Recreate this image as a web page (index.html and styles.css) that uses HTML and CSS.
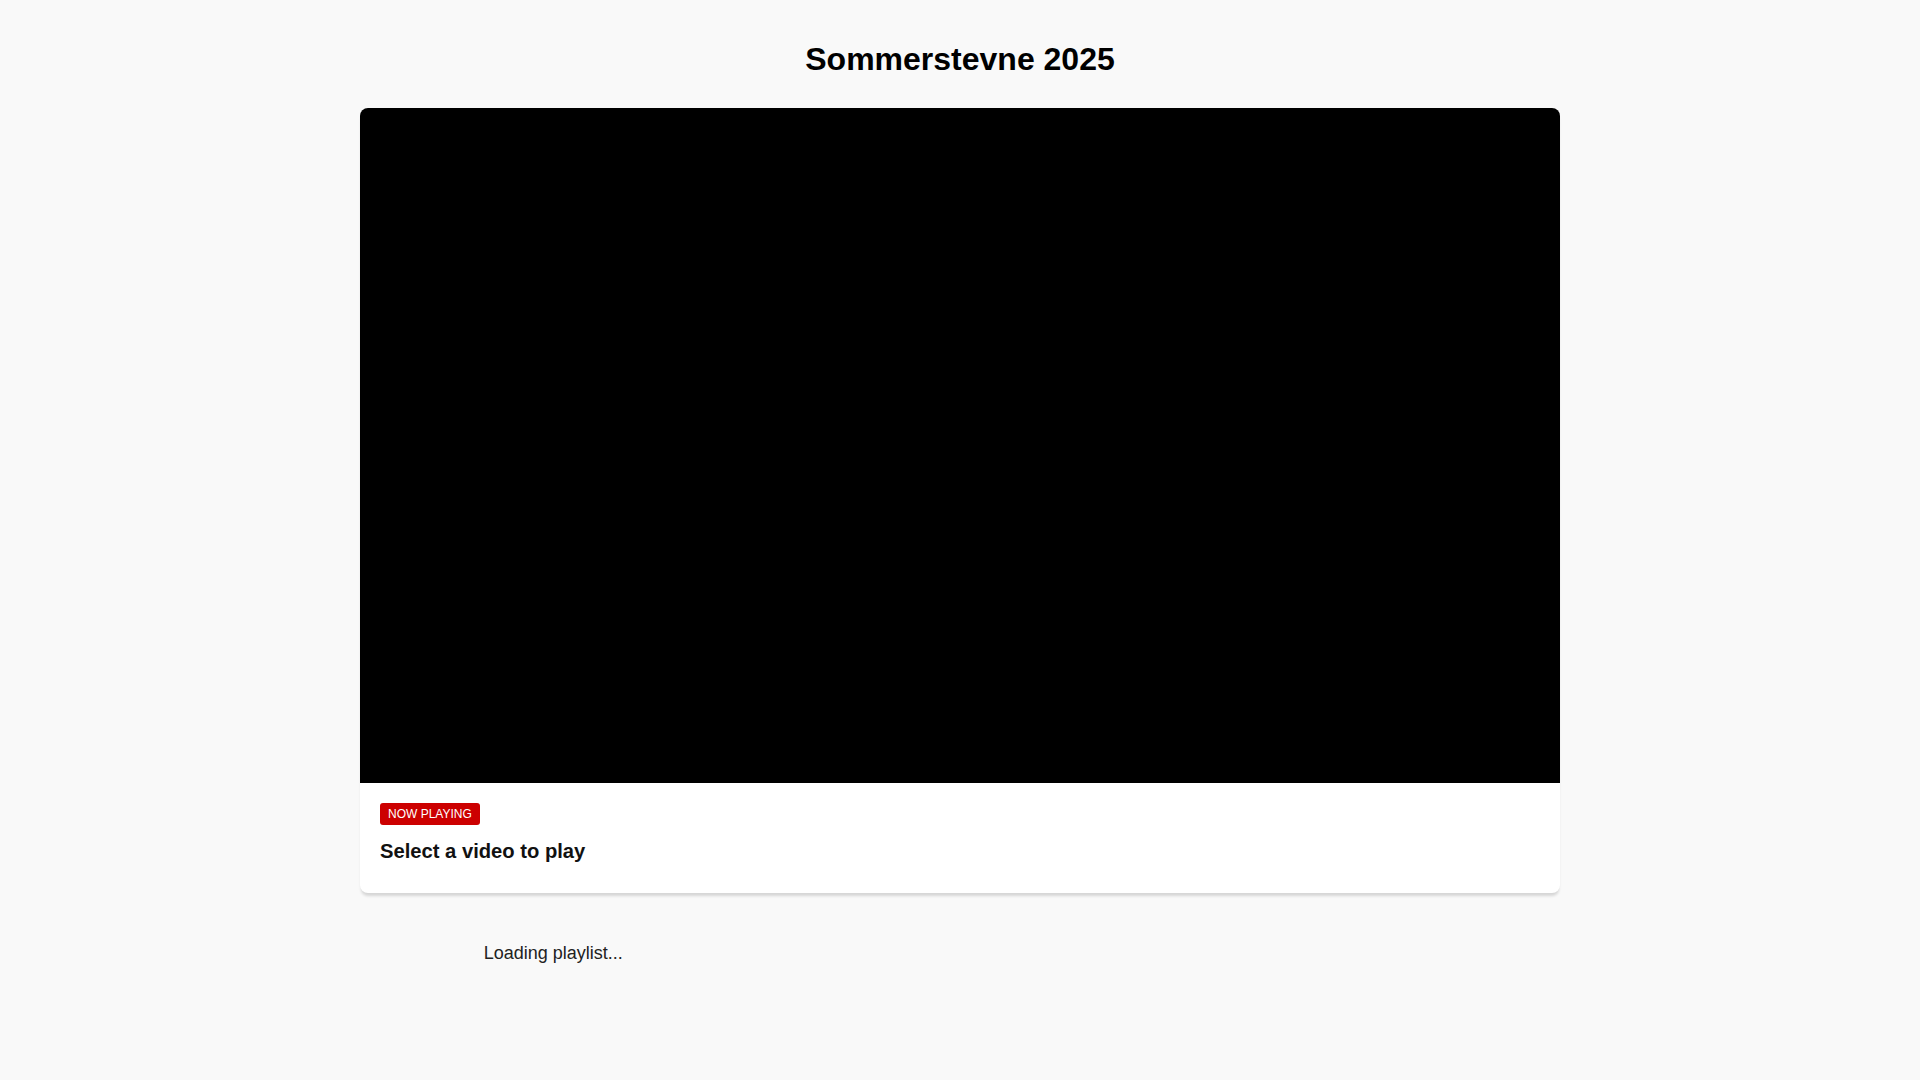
FILE: index.html
```html
<!DOCTYPE html>
<html lang="no">
<head>
<meta charset="utf-8">
<title>Sommerstevne 2025</title>
<link rel="stylesheet" href="styles.css">
</head>
<body>
<div class="page">
  <h1 class="page-title">Sommerstevne 2025</h1>
  <div class="player-card">
    <div class="video-area"></div>
    <div class="now-playing">
      <span class="badge">NOW PLAYING</span>
      <h2 class="video-title">Select a video to play</h2>
    </div>
  </div>
  <div class="playlist">
    <div class="loading">Loading playlist...</div>
  </div>
</div>
</body>
</html>
```
FILE: styles.css
```css
html, body {
  margin: 0;
  padding: 0;
  background: #f9f9f9;
  font-family: "Liberation Sans", Arial, sans-serif;
  color: #111;
}

.page {
  width: 1200px;
  margin: 0 auto;
  padding: 20px 0;
}

.page-title {
  margin: 20.5px 0 30px;
  font-size: 32px;
  font-weight: bold;
  text-align: center;
  color: #000;
}

.player-card {
  background: #fff;
  border-radius: 8px;
  overflow: hidden;
  box-shadow: 0 4px 3px -1px rgba(0, 0, 0, 0.14);
}

.video-area {
  width: 1200px;
  height: 675px;
  background: #000;
}

.now-playing {
  padding: 20px 20px 21px;
}

.badge {
  display: inline-block;
  vertical-align: top;
  background: #cc0000;
  color: #fff;
  font-size: 12px;
  line-height: 14px;
  padding: 4px 8px;
  border-radius: 3px;
}

.video-title {
  margin: 15.5px 0 9px;
  font-size: 20.2px;
  font-weight: bold;
  color: #111;
}

.playlist {
  margin-top: 30px;
  display: grid;
  grid-template-columns: repeat(3, 1fr);
  gap: 20px;
}

.loading {
  padding: 20px 0;
  text-align: center;
  font-size: 18px;
  color: #222;
}
```
